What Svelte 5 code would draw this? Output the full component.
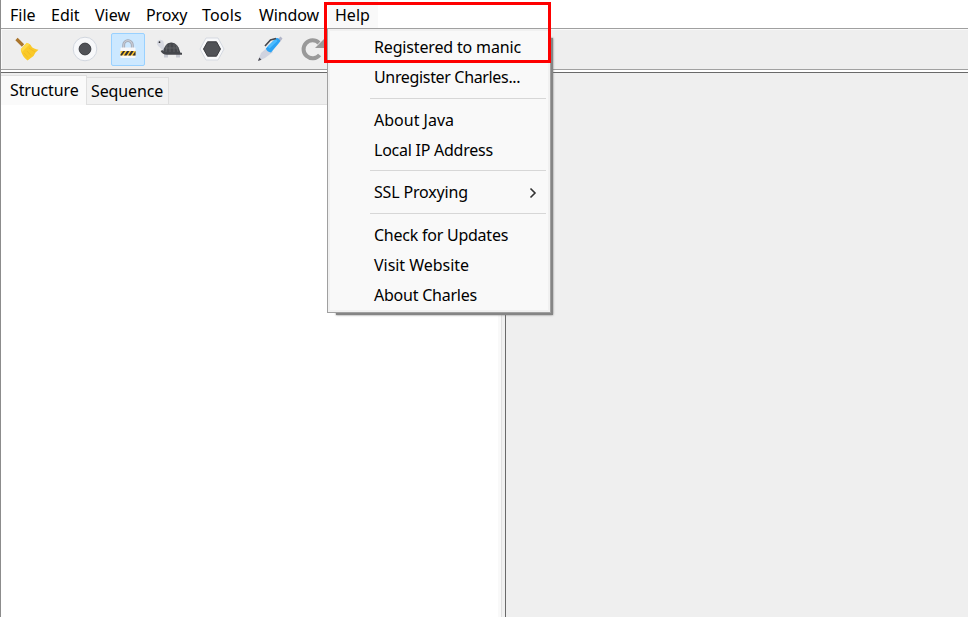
<script>
  const menus = [
    { label: 'File', width: 41 },
    { label: 'Edit', width: 44 },
    { label: 'View', width: 51 },
    { label: 'Proxy', width: 56, spacing: -0.15 },
    { label: 'Tools', width: 57, spacing: 0.2 },
    { label: 'Window', width: 76, spacing: -0.12 },
    { label: 'Help', width: 50, open: true }
  ];
  const groups = [
    [{ label: 'Registered to manic', spacing: -0.16 }, { label: 'Unregister Charles...', spacing: -0.34 }],
    [{ label: 'About Java' }, { label: 'Local IP Address', spacing: -0.25 }],
    [{ label: 'SSL Proxying', sub: true, spacing: -0.16 }],
    [
      { label: 'Check for Updates', spacing: -0.24 },
      { label: 'Visit Website', spacing: -0.04 },
      { label: 'About Charles', spacing: -0.23 }
    ]
  ];
</script>

<div class="window">
  <nav class="menubar">
    {#each menus as menu}
      <div class="menu" class:open={menu.open} style="width: {menu.width}px; letter-spacing: {menu.spacing ?? 0}px"><span>{menu.label}</span></div>
    {/each}
  </nav>

  <div class="toolbar">
    <svg class="broom" width="24" height="24" viewBox="0 0 24 24">
      <path d="M1.5 2 8 8.5" stroke="#aa752d" stroke-width="3.2" />
      <path d="M6.5 11.5 11.8 6Q15.5 6.5 16.5 9.5 18.5 12 23.5 12.8L20.5 15.5 18.5 19 12.5 23.5Q7 19.5 5.8 13Z" fill="#fac928" />
      <path d="M5.8 12 11.8 5.8 14.5 7.5 7 15Z" fill="#ffda48" />
      <path d="M9 16 13 20.5M12 14 16 18.5M14 11 20 15" stroke="#eeb622" stroke-width=".7" fill="none" />
    </svg>
    <svg class="record" width="26" height="26" viewBox="0 0 26 26">
      <circle cx="13" cy="13" r="11.8" fill="#f7f8fa" stroke="#d2d7df" />
      <circle cx="13" cy="13" r="5.9" fill="#505257" stroke="#3e4045" />
    </svg>
    <div class="lock">
      <svg width="18" height="20" viewBox="0 0 18 20">
        <path d="M4.7 10V6a4.3 4.3 0 0 1 8.6 0v4" fill="none" stroke="#9da3af" stroke-width="2.8" />
        <path d="M4.7 10V6a4.3 4.3 0 0 1 8.6 0v4" fill="none" stroke="#c9ccd5" stroke-width="1.3" />
        <rect x="1.5" y="8.5" width="15" height="10.5" rx="1" fill="#f8f8fa" />
        <path d="M1.5 12h15v4.5h-15z" fill="#ffc62d" />
        <path d="M1.5 15.5 4 12h2.2L3 16.5H1.5zM5 16.5 8 12h2.5l-3 4.5zM9.2 16.5l3-4.5h2.5l-3 4.5zM13.5 16.5l3-4.5v4.5z" fill="#303036" />
      </svg>
    </div>
    <svg class="turtle" width="26" height="20" viewBox="0 0 26 20">
      <path d="M4.5 9Q0 6 1.2 2.8C2 0 7 .1 7.5 3Q8 6 9 9L8 13Z" fill="#d6d8e0" />
      <path d="M8 14.5h4v4H8zM20 14.5h4v4h-4z" fill="#c8cad2" />
      <path d="M7 14Q8 4 15 3.5Q22 3 24.5 14Z" fill="#45474c" />
      <path d="M10 13 11 6M14 13V5M18 13V5M22 13 20 6M9 9h14" stroke="#65676b" stroke-width=".8" fill="none" />
      <path d="M5.5 11.5Q7 14.5 11 14.8H26" fill="none" stroke="#45474c" stroke-width="2" />
      <circle cx="3.5" cy="3.2" r=".9" fill="#292a2e" />
    </svg>
    <svg class="hexagon" width="26" height="24" viewBox="0 0 26 24">
      <path d="M7 1h12l6 11-6 11H7L1 12Z" fill="#f8f9fb" stroke="#d5d9e1" />
      <path d="M8.5 4.8h9l4 7.2-4 7.2h-9l-4-7.2Z" fill="#505257" stroke="#38393e" />
    </svg>
    <svg class="pen" width="26" height="26" viewBox="0 0 26 26">
      <path d="m1 25 3-8 7-6 5 5-8 6Z" fill="#d0d3df" />
      <path d="m1 25 1.3-3.5 2.2 2.2Z" fill="#4c4b53" />
      <path d="m21 3 2.5-2.5 2 2L23 6Z" fill="#b2b6c9" />
      <path d="M8.8 12.5 18 3Q20 1 22.5 3.5 24 5 22 7L14 16.5Q10 16 8.8 12.5Z" fill="#2ba3f4" />
      <path d="m11.5 11.5 8-7.5" stroke="#4bbcff" stroke-width="3" />
      <path d="M8 10 13.5 4 19 2.5" fill="none" stroke="#45464b" stroke-width="1.6" />
    </svg>
    <svg class="repeat" width="26" height="24" viewBox="0 0 26 24">
      <path d="M19.6 18A9 9 0 1 1 19 6" fill="none" stroke="#999" stroke-width="4" />
      <path d="M24 2v9h-9Z" fill="#999" />
    </svg>
  </div>

  <main>
    <section class="left-pane">
      <div class="tabs">
        <div class="tab active"><span>Structure</span></div>
        <div class="tab sequence"><span>Sequence</span></div>
      </div>
      <div class="tree"></div>
    </section>
    <div class="splitter"></div>
    <section class="right-pane"></section>
  </main>

  <div class="menu-shadow"></div>
  <div class="dropdown">
    {#each groups as group}
      <div class="group">
        {#each group as item}
          <div class="item">
            <span style="letter-spacing: {item.spacing ?? 0}px">{item.label}</span>
            {#if item.sub}
              <svg width="8" height="12" viewBox="0 0 8 12"><path d="m1.5 1.5 4.5 4.5-4.5 4.5" fill="none" stroke="#333" stroke-width="1.6" /></svg>
            {/if}
          </div>
        {/each}
      </div>
    {/each}
  </div>
  <div class="highlight"></div>
</div>

<style>
  :global(body) { margin: 0; overflow: hidden; }
  .window, .window * { box-sizing: border-box; }
  .window {
    position: relative; width: 968px; height: 617px; display: flex; flex-direction: column;
    background: #fff; border-left: 1px solid #8c8c8c; overflow: hidden;
    font: 16px/22px "Noto Sans", "Open Sans", sans-serif; color: #000; white-space: nowrap;
  }
  svg { display: block; flex: none; }
  .menubar { height: 28px; display: flex; padding-left: 2px; }
  .menu { padding: 4px 0 0 7px; flex: none; }
  .menu.open { background: #f9f9f9; }
  .toolbar {
    height: 42px; flex: none; display: flex; align-items: center; background: #eee;
    border-top: 1px solid #a0a0a0; border-bottom: 1px solid #a0a0a0; box-shadow: inset 1px 1px #fafafa;
  }
  .broom { margin-left: 14px; }
  .record { margin-left: 33px; }
  .lock {
    width: 34px; height: 33px; margin-left: 13px; display: flex; align-items: center; justify-content: center;
    background: #cce8ff; border: 1px solid #99d1ff; border-radius: 2px;
  }
  .turtle { margin-left: 11px; }
  .hexagon { margin-left: 17px; }
  .pen { margin-left: 32px; }
  .repeat { margin-left: 17px; }
  main { margin-top: 2px; flex: 1; display: flex; border-top: 1px solid #696969; min-height: 0; }
  .left-pane { width: 500px; display: flex; flex-direction: column; }
  .tabs { height: 32px; flex: none; background: #eee; display: flex; align-items: flex-end; border-bottom: 1px solid #e0e0e0; }
  .tab { border: 1px solid #dfdfdf; background: #f2f2f2; }
  .active { width: 86px; height: 30px; padding: 3px 0 0 9px; background: #fafafa; border-left: 0; margin-bottom: -1px; letter-spacing: -.13px; }
  .active { border-bottom: 0; }
  .sequence { width: 82px; height: 27px; padding: 2px 0 0 4px; border-left: 0; border-bottom: 0; letter-spacing: -.13px; }
  .tree { flex: 1; background: #fff; border-right: 3px solid #f9f9f9; }
  .splitter { width: 5px; flex: none; border-left: 1px solid #e0e0e0; border-right: 1px solid #696969; background: #f1f1f1; }
  .right-pane { flex: 1; background: #efefef; }
  .menu-shadow { position: absolute; left: 335px; top: 38px; width: 217px; height: 277px; background: #858585; box-shadow: 0 0 2px #777; }
  .dropdown {
    position: absolute; left: 326px; top: 28px; width: 224px; height: 285px; padding: 4px 4px 0 42px;
    border: 1px solid #a0a0a0; background: #f9f9f9; box-shadow: inset 0 0 0 2px #f1f1f1;
  }
  .group + .group { border-top: 1px solid #d7d7d7; margin-top: 5px; padding-top: 7px; }
  .group:nth-child(3) { margin-top: 4px; }
  .item { height: 30px; padding: 3px 9px 0 4px; display: flex; justify-content: space-between; }
  .item svg { margin-top: 6px; }
  .highlight { position: absolute; left: 323px; top: 2px; width: 227px; height: 61px; border: 3px solid #fe0000; }
</style>
